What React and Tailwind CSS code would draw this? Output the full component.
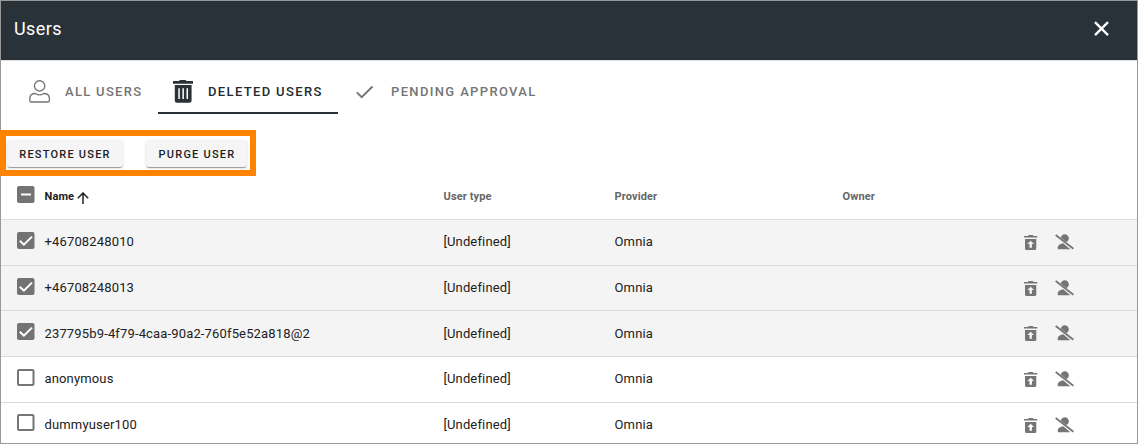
import React from "react";

const rows = [
  { name: "+46708248010", selected: true, height: "h-[46px] border-b", box: "pt-[12px]", text: "pt-[12px]" },
  { name: "+46708248013", selected: true, height: "h-[45px] border-b", box: "pt-[12px]", text: "pt-[12px]" },
  { name: "237795b9-4f79-4caa-90a2-760f5e52a818@2", selected: true, height: "h-[46px] border-b", box: "pt-[12px]", text: "pt-[13px]" },
  { name: "anonymous", selected: false, height: "h-[46px] border-b", box: "pt-[12px]", text: "pt-[12px]" },
  { name: "dummyuser100", selected: false, height: "h-[40px]", box: "pt-[11px]", text: "pt-[12px]" },
];

function Checkbox({ state }) {
  return (
    <svg className="block h-[18px] w-[18px]" viewBox="0 0 18 18" fill="none">
      {state === "off" ? (
        <rect x="1" y="1" width="15.5" height="15" rx="1" stroke="#757575" strokeWidth="2" />
      ) : (
        <rect x="0" y="0" width="17.5" height="17" rx="2" fill="#737373" />
      )}
      {state === "on" && <path d="M2.8 8.7L6.9 12.7L15 4.6" stroke="#fff" strokeWidth="2" />}
      {state === "mixed" && <path d="M4 8.5H14" stroke="#fff" strokeWidth="2" />}
    </svg>
  );
}

function RestoreIcon() {
  return (
    <svg className="block h-[15px] w-[14px]" viewBox="0 0 14 15" fill="#757575">
      <path d="M0 1H4L4.8 0H8.8L9.6 1H13.3V2.6H0Z" />
      <path fillRule="evenodd" d="M1 4H12.3V13.5Q12.3 15 10.8 15H2.5Q1 15 1 13.5ZM6.7 5.7L3.4 9.1H5.5V12.7H7.9V9.1H10Z" />
    </svg>
  );
}

function UserOffIcon() {
  return (
    <svg className="block h-[16px] w-[20px]" viewBox="0 0 20 16">
      <path d="M5.8 3.6C6.2 1.6 7.8 0.3 9.8 0.3C12 0.3 13.8 2.1 13.8 4.3C13.8 6.1 12.8 7.5 11.2 8.1Z" fill="#757575" />
      <path d="M8.2 9.2L15.3 15.3H2.8V13.3C2.8 10.9 5.6 9.7 8.2 9.2Z" fill="#757575" />
      <path d="M0.7 1L18.4 14.7" stroke="#757575" strokeWidth="1.8" />
    </svg>
  );
}

export default function App() {
  return (
    <div className="h-[444px] w-[1138px] border border-[#999] bg-white font-['Roboto',sans-serif] text-[#212121]">
      <header className="flex h-[59px] items-start justify-between bg-[#293238] pl-[13px] pr-[27px] text-white">
        <h1 className="pt-[16px] text-[18px] leading-[24px] tracking-[0.4px]">Users</h1>
        <svg className="mt-[20px] h-[16px] w-[16px]" viewBox="0 0 16 16" fill="none" stroke="#fff" strokeWidth="2.3">
          <path d="M1 1.1L14 14.1M14 1.1L1 14.1" />
        </svg>
      </header>

      <nav className="flex h-[54px] border-t border-[#dedede] text-[13px] font-medium leading-[20px] tracking-[1.35px] text-[#757575]">
        <div className="flex w-[157px] pl-[28px] pt-[19px]">
          <svg className="h-[23px] w-[22px]" viewBox="0 0 22 23" fill="none" stroke="#757575" strokeWidth="1.35">
            <circle cx="10.6" cy="5.9" r="5.2" />
            <path d="M6.4 13.5C8.8 15.1 12.4 15.1 14.8 13.5C18.6 13.5 20.4 15.6 20.4 18.5V20.4Q20.4 22 18.8 22H2.4Q.8 22 .8 20.4V18.5C.8 15.6 2.6 13.5 6.4 13.5Z" />
          </svg>
          <span className="ml-[14px] mt-[2px] tracking-[1.3px]">ALL USERS</span>
        </div>
        <div className="flex w-[180px] border-b-2 border-[#293238] pl-[14px] pt-[18px] text-[#212b30]">
          <svg className="mt-px h-[24px] w-[22px]" viewBox="0 0 22 24" fill="#293238">
            <path d="M1 1H7Q7.3 0 8.6 0H12.9Q14.2 0 14.5 1H21V3.8H1Z" />
            <path fillRule="evenodd" d="M2.8 5H19.6V20.6Q19.6 22.8 17.4 22.8H5Q2.8 22.8 2.8 20.6ZM6.3 8.3V19H7.8V8.3ZM10.4 8.3V19H11.9V8.3ZM14.5 8.3V19H16V8.3Z" />
          </svg>
          <span className="ml-[14px] mt-[3px]">DELETED USERS</span>
        </div>
        <div className="flex pl-[18px] pt-[20px]">
          <svg className="mt-[4px] h-[14px] w-[18px]" viewBox="0 0 18 14" fill="none" stroke="#757575" strokeWidth="1.9">
            <path d="M.8 7.3L5.7 12.2L16.5 1.5" />
          </svg>
          <span className="ml-[17px] mt-px">PENDING APPROVAL</span>
        </div>
      </nav>

      <div className="-ml-px mt-[16px] flex h-[46px] w-[256px] gap-[23px] border-[6px] border-[#ff8200] pl-[1px] pt-[4px] text-[11px] font-medium leading-[29px] tracking-[1.22px]">
        <button className="h-[27px] w-[116px] rounded-[3px] bg-[#f5f5f5] shadow-[0_2px_1px_-1px_rgba(0,0,0,0.25),0_1px_1px_rgba(0,0,0,0.14),0_1px_3px_rgba(0,0,0,0.12)]">RESTORE USER</button>
        <button className="h-[27px] w-[101px] rounded-[3px] bg-[#f5f5f5] pl-px shadow-[0_2px_1px_-1px_rgba(0,0,0,0.25),0_1px_1px_rgba(0,0,0,0.14),0_1px_3px_rgba(0,0,0,0.12)]">PURGE USER</button>
      </div>

      <main>
        <div className="grid h-[44px] grid-cols-[43.5px_399px_171px_228px_1fr] border-b border-[#dedede] text-[11px] font-bold leading-[16px] tracking-[0.13px] text-[#666]">
          <div className="pl-[16px] pt-[10px]"><Checkbox state="mixed" /></div>
          <div className="flex pt-[13px] text-[#212121]">
            Name
            <svg className="ml-[3px] mt-[3px] h-[12px] w-[12px]" viewBox="0 0 12 12" fill="none" stroke="#212121" strokeWidth="1.5">
              <path d="M6 12V1M.8 6.2L6 1L11.2 6.2" />
            </svg>
          </div>
          <div className="pt-[13px]">User type</div>
          <div className="pt-[13px]">Provider</div>
          <div className="pt-[13px]">Owner</div>
        </div>

        {rows.map((row) => (
          <div
            key={row.name}
            className={`grid grid-cols-[43.5px_399px_171px_408.5px_1fr] border-[#dadada] text-[13px] leading-[20px] tracking-[0.15px] ${row.height} ${row.selected ? "bg-[#f4f4f4]" : "bg-white"}`}
          >
            <div className={`pl-[16px] ${row.box}`}><Checkbox state={row.selected ? "on" : "off"} /></div>
            <div className={row.text}>{row.name}</div>
            <div className={row.text}>[Undefined]</div>
            <div className={row.text}>Omnia</div>
            <div className="flex gap-[17px] pl-px pt-[12px]">
              <div className="pt-[3px]"><RestoreIcon /></div>
              <div className="pt-[2px]"><UserOffIcon /></div>
            </div>
          </div>
        ))}
      </main>
    </div>
  );
}
